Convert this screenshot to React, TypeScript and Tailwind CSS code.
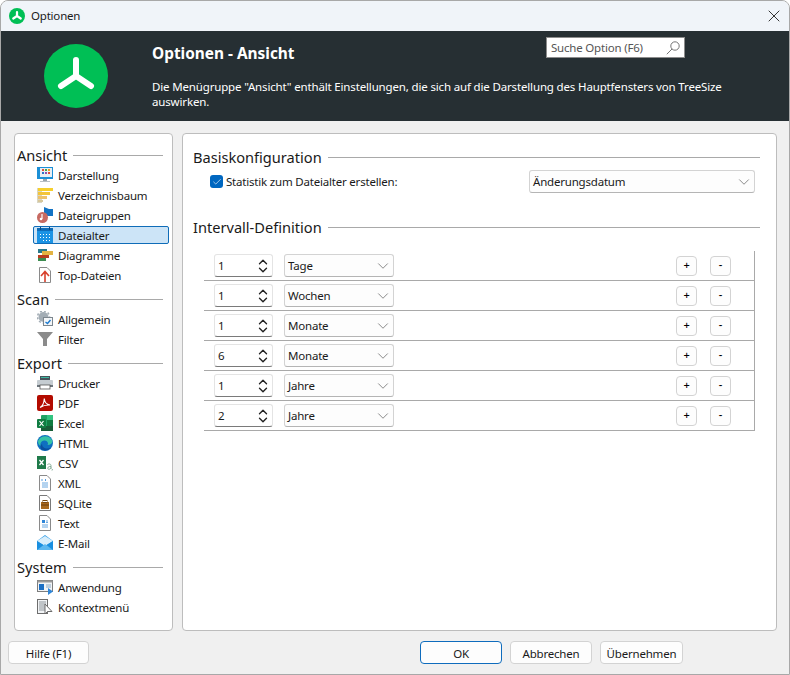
import { Check, ChevronDown, ChevronUp, X } from "lucide-react";
import type { ReactNode } from "react";

const font = { fontFamily: '"Noto Sans", "Open Sans", sans-serif' };

const TreeMark = ({ size, width }: { size: number; width: number }) => (
  <svg width={size} height={size} viewBox="0 0 64 64" className="shrink-0">
    <circle cx="32" cy="32" r="32" fill="#00bf55" />
    <path d="M32 16V32M32 32L17 42M32 32L47 42" stroke="#fff" strokeWidth={width} strokeLinecap="round" fill="none" />
  </svg>
);

const Ico = ({ children }: { children: ReactNode }) => (
  <svg width="16" height="16" viewBox="0 0 16 16" className="shrink-0">
    {children}
  </svg>
);

const icons: Record<string, ReactNode> = {
  Darstellung: (
    <Ico>
      <rect x="0" y="0" width="16" height="12" fill="#1b8fd6" />
      <rect x="3" y="1" width="12" height="9" fill="#e8eef3" />
      <rect x="5" y="2" width="2" height="2" fill="#e04a3a" />
      <rect x="8" y="2" width="2" height="2" fill="#45a845" />
      <rect x="11" y="2" width="2" height="2" fill="#e8a020" />
      <rect x="5" y="5" width="2" height="2" fill="#2a70c8" />
      <rect x="8" y="5" width="2" height="2" fill="#8a50b0" />
      <rect x="11" y="5" width="2" height="2" fill="#e04a3a" />
      <rect x="6" y="12" width="4" height="2" fill="#9aa4ac" />
      <rect x="3" y="14" width="10" height="1" fill="#b8c0c6" />
    </Ico>
  ),
  Verzeichnisbaum: (
    <Ico>
      <rect x="0" y="1" width="5" height="15" fill="#d9d6c4" />
      <rect x="1" y="1" width="15" height="3" fill="#f6cf2c" />
      <rect x="1" y="5" width="12" height="3" fill="#f3c53a" />
      <rect x="1" y="9" width="9" height="3" fill="#eec26a" />
      <rect x="1" y="13" width="5" height="2" fill="#d8c79a" />
    </Ico>
  ),
  Dateigruppen: (
    <Ico>
      <path d="M7 0L12 2H16V9H7Z" fill="#1273c4" />
      <circle cx="5.5" cy="10.5" r="5.5" fill="#c76a62" />
      <path d="M5 7V12" stroke="#fff" strokeWidth="1.2" />
      <circle cx="4" cy="12" r="1.3" fill="#fff" />
    </Ico>
  ),
  Dateialter: (
    <Ico>
      <rect x="0" y="1" width="16" height="15" fill="#1b93e4" />
      <rect x="0" y="1" width="16" height="3" fill="#0f6cb8" />
      <rect x="3" y="0" width="1" height="3" fill="#0b4d86" />
      <rect x="12" y="0" width="1" height="3" fill="#0b4d86" />
      <path d="M3 7h1v1H3zM6 7h1v1H6zM9 7h1v1H9zM12 7h1v1h-1zM3 10h1v1H3zM6 10h1v1H6zM9 10h1v1H9zM12 10h1v1h-1zM6 13h1v1H6zM9 13h1v1H9zM12 13h1v1h-1z" fill="#fff" />
    </Ico>
  ),
  Diagramme: (
    <Ico>
      <rect x="1" y="2" width="9" height="4" fill="#2a7a8c" />
      <rect x="5" y="4" width="11" height="4" fill="#e3b341" />
      <rect x="1" y="8" width="11" height="3" fill="#b83d1e" />
      <rect x="1" y="11" width="8" height="3" fill="#3d8c50" />
    </Ico>
  ),
  "Top-Dateien": (
    <Ico>
      <path d="M2.5 0.5H10L13.5 4V15.5H2.5Z" fill="#fff" stroke="#8a8a8a" />
      <path d="M8 15V5M4 9L8 4.5L12 9" stroke="#d8402c" strokeWidth="1.6" fill="none" />
    </Ico>
  ),
  Allgemein: (
    <Ico>
      <circle cx="6.5" cy="6" r="5" fill="#a3adb5" />
      <circle cx="6.5" cy="6" r="6" fill="none" stroke="#a3adb5" strokeWidth="1.6" strokeDasharray="2 2" />
      <rect x="6.5" y="6.5" width="9" height="8" fill="#f4f6f8" stroke="#7c868e" />
      <path d="M8.5 11L10.5 12.5L13.5 9" stroke="#1b7ad0" strokeWidth="1.4" fill="none" />
    </Ico>
  ),
  Filter: (
    <Ico>
      <path d="M0 1H16L10 8V15L6 15V8Z" fill="#8b8b8b" />
    </Ico>
  ),
  Drucker: (
    <Ico>
      <rect x="3" y="1" width="10" height="4" fill="#48525a" />
      <rect x="4" y="2" width="8" height="1" fill="#3bb8a0" />
      <rect x="0" y="5" width="16" height="7" rx="1" fill="#c5ccd1" />
      <rect x="0" y="10" width="16" height="2" fill="#6d767d" />
      <rect x="3" y="10" width="10" height="4" fill="#fff" stroke="#555" strokeWidth="0.8" />
    </Ico>
  ),
  PDF: (
    <Ico>
      <rect x="0" y="0" width="16" height="16" rx="2" fill="#b30b00" />
      <path d="M3 12.5C5 11.5 7 7.5 7.3 3.5C7.5 7 9.5 9.5 13 10C10 9.8 6 10.5 3 12.5Z" fill="none" stroke="#fff" strokeWidth="1.1" />
    </Ico>
  ),
  Excel: (
    <Ico>
      <rect x="4" y="0" width="12" height="16" rx="1" fill="#21a366" />
      <rect x="10" y="0" width="6" height="5" fill="#33c481" />
      <rect x="4" y="11" width="12" height="5" fill="#185c37" />
      <rect x="10" y="5" width="6" height="6" fill="#107c41" />
      <rect x="0" y="4" width="9" height="9" rx="1" fill="#107c41" />
      <path d="M2.5 6L6.5 11M6.5 6L2.5 11" stroke="#fff" strokeWidth="1.2" />
    </Ico>
  ),
  HTML: (
    <Ico>
      <circle cx="8" cy="8" r="8" fill="#0f6fc0" />
      <path d="M1 6C3 1 11 -1 15 5C16 8 14 10 10.5 10C12 8 10 5 7 5.5C4 6 3 8.5 3.5 11C1.5 10 1 8 1 6Z" fill="#36c3a8" />
      <path d="M5 9C5 13 10 15 14 12.5C12 15.5 7 16.5 4 14C3 12 3.5 10 5 9Z" fill="#0b4f9e" />
    </Ico>
  ),
  CSV: (
    <Ico>
      <rect x="0" y="1" width="9" height="13" fill="#1f7a4a" />
      <path d="M2.5 5L6.5 10M6.5 5L2.5 10" stroke="#fff" strokeWidth="1.3" />
      <path d="M14 14V10.5C14 8.5 10.5 8.5 10.5 10M14 11.5C10 11 10 14.5 12 14.3C13 14.2 14 13.5 14 12.5" stroke="#7fa892" fill="none" strokeWidth="0.9" />
      <path d="M15 15.5L15.5 14" stroke="#7fa892" strokeWidth="0.9" />
    </Ico>
  ),
  XML: (
    <Ico>
      <path d="M2.5 0.5H10L13.5 4V15.5H2.5Z" fill="#fff" stroke="#8a8a8a" />
      <path d="M5.5 4L4.5 5L5.5 6M8 4L9 5L8 6" stroke="#2f86d8" fill="none" strokeWidth="0.8" />
      <path d="M5 8H11M5 10H11M5 12H11" stroke="#6aa8e0" />
    </Ico>
  ),
  SQLite: (
    <Ico>
      <path d="M2.5 0.5H10L13.5 4V15.5H2.5Z" fill="#fff" stroke="#7a7a7a" />
      <rect x="4" y="7" width="8" height="7" fill="#a9691f" />
      <rect x="6" y="5.5" width="4" height="2" fill="none" stroke="#7a4a14" />
      <rect x="4" y="9.5" width="8" height="1" fill="#6b3f0e" />
    </Ico>
  ),
  Text: (
    <Ico>
      <path d="M2.5 0.5H10L13.5 4V15.5H2.5Z" fill="#fff" stroke="#8a8a8a" />
      <rect x="5" y="5" width="3" height="3" fill="#2f86d8" />
      <path d="M9 6H11M9 7.5H11M5 10H11M5 12H11" stroke="#6aa8e0" />
    </Ico>
  ),
  "E-Mail": (
    <Ico>
      <path d="M0 6L8 0L16 6V15H0Z" fill="#2a9ae6" />
      <path d="M0 6L8 11L16 6L8 1Z" fill="#d8eefb" />
      <path d="M0 6L8 11L16 6V15H0Z" fill="#1a8fe0" />
      <path d="M0 15L8 9L16 15Z" fill="#5cb8f0" />
    </Ico>
  ),
  Anwendung: (
    <Ico>
      <rect x="0.5" y="1.5" width="15" height="11" fill="#f2f4f6" stroke="#7d7d7d" />
      <rect x="0.5" y="1.5" width="15" height="2" fill="#9a9a9a" />
      <rect x="2" y="5" width="5" height="6" fill="#1c6fc4" />
      <path d="M9 6H14M9 8H14" stroke="#8aa8c4" />
      <path d="M11 9L16 12.5L11 16Z" fill="#2f86d8" />
    </Ico>
  ),
  Kontextmenü: (
    <Ico>
      <rect x="0.5" y="0.5" width="10" height="14" fill="#f2f4f6" stroke="#6d6d6d" />
      <path d="M2 3H9M2 5H9M2 7H9M2 9H9M2 11H9" stroke="#8d9499" />
      <path d="M8 5L8 15L10.5 12.5L15 12.5Z" fill="#fff" stroke="#6d6d6d" />
    </Ico>
  ),
};

const sections = [
  { title: "Ansicht", items: ["Darstellung", "Verzeichnisbaum", "Dateigruppen", "Dateialter", "Diagramme", "Top-Dateien"] },
  { title: "Scan", items: ["Allgemein", "Filter"] },
  { title: "Export", items: ["Drucker", "PDF", "Excel", "HTML", "CSV", "XML", "SQLite", "Text", "E-Mail"] },
  { title: "System", items: ["Anwendung", "Kontextmenü"] },
];

const rows = [
  ["1", "Tage"],
  ["1", "Wochen"],
  ["1", "Monate"],
  ["6", "Monate"],
  ["1", "Jahre"],
  ["2", "Jahre"],
];

const GroupTitle = ({ title }: { title: string }) => (
  <div className="flex items-center gap-[6px] h-[20px]">
    <span className="text-[14.6px] tracking-normal text-[#1a1a1a] leading-[20px]">{title}</span>
    <div className="flex-1 h-px bg-[#a9a9a9]" />
  </div>
);

const Combo = ({ value, className }: { value: string; className: string }) => (
  <div className={`flex items-center justify-between pl-[3px] pr-px bg-[#fdfdfd] border border-[#d3d3d3] border-b-[#b5b5b5] rounded-[3px] text-[#1a1a1a] ${className}`}>
    <span>{value}</span>
    <ChevronDown size={18} strokeWidth={1} className="text-[#666]" />
  </div>
);

const SmallBtn = ({ label }: { label: string }) => (
  <div className="w-[21px] h-[20px] flex items-center justify-center bg-[#fdfdfd] border border-[#d3d3d3] rounded-[4px] text-[11px] font-medium text-black">
    {label}
  </div>
);

const FootBtn = ({ label, className }: { label: string; className: string }) => (
  <div className={`h-[23px] flex items-center justify-center bg-[#fdfdfd] border rounded-[4px] text-[#1a1a1a] ${className}`}>
    <span className="pt-[2px]">{label}</span>
  </div>
);

export default function App() {
  return (
    <div style={font} className="w-[790px] h-[675px] flex flex-col bg-[#f0f0f0] border border-[#a8a8a8] rounded-t-[8px] overflow-hidden text-[11.5px] tracking-[-0.2px]">
      {/* title bar */}
      <div className="h-[30px] shrink-0 flex items-center bg-[#f0f4f9] pl-2 pr-[5px]">
        <TreeMark size={16} width={9} />
        <span className="ml-[6px] text-[#1a1a1a]">Optionen</span>
        <X size={20} strokeWidth={1.1} className="ml-auto text-[#222]" />
      </div>

      {/* header */}
      <div className="h-[90px] shrink-0 flex bg-[#262f33] text-white pl-[43px] pr-[60px]">
        <div className="pt-[13px]">
          <TreeMark size={64} width={6} />
        </div>
        <div className="ml-[44px] flex-1 pt-[6px]">
          <div className="flex items-start justify-between pr-[44px]">
            <div className="pt-[6px] text-[15.4px] tracking-normal font-bold leading-[22px]">Optionen - Ansicht</div>
            <div className="w-[139px] h-[21px] flex items-center justify-between pl-1 pr-1 bg-white border border-[#8c8c8c] text-[#555]">
              <span>Suche Option (F6)</span>
              <svg width="14" height="14" viewBox="0 0 14 14" fill="none" stroke="#666" strokeWidth="0.9" className="shrink-0">
                <circle cx="9" cy="5" r="4.2" />
                <path d="M6 8L0.8 13.2" />
              </svg>
            </div>
          </div>
          <p className="mt-[14px] leading-[15px] tracking-[-0.155px]">
            Die Menügruppe "Ansicht" enthält Einstellungen, die sich auf die Darstellung des Hauptfensters von TreeSize auswirken.
          </p>
        </div>
      </div>

      {/* panels */}
      <div className="flex-1 flex gap-[9px] pl-[13px] pr-3 pt-3">
        <div className="w-[159px] h-[498px] bg-white border border-[#bdbdbd] rounded-[4px] pl-[2px] pr-[9px] pt-[7px]">
          {sections.map((s) => (
            <div key={s.title}>
              <div className="pt-1">
                <GroupTitle title={s.title} />
              </div>
              {s.items.map((item) =>
                item === "Dateialter" ? (
                  <div key={item} className="h-[18px] my-px ml-[16px] -mr-[6px] flex items-center gap-[5px] pl-[3px] bg-[#cce4f7] border border-[#0f6cb8] rounded-[2px] text-[#1a1a1a]">
                    {icons[item]}
                    <span className="pt-[2px]">{item}</span>
                  </div>
                ) : (
                  <div key={item} className="h-[20px] ml-[16px] -mr-[6px] flex items-center gap-[5px] pl-[4px] text-[#1a1a1a]">
                    {icons[item]}
                    <span className="pt-[2px]">{item}</span>
                  </div>
                )
              )}
            </div>
          ))}
        </div>

        <div className="w-[595px] h-[498px] bg-white border border-[#bdbdbd] rounded-[4px] pl-[10px] pr-4 pt-[13px]">
          <GroupTitle title="Basiskonfiguration" />
          <div className="mt-[3px] ml-[17px] mr-[5px] h-[23px] flex items-center justify-between">
            <div className="flex items-center gap-[3px] text-[#1a1a1a]">
              <div className="w-[13px] h-[13px] rounded-[3px] bg-[#0067c0] flex items-center justify-center">
                <Check size={10} strokeWidth={1.5} className="text-white" />
              </div>
              Statistik zum Dateialter erstellen:
            </div>
            <Combo value="Änderungsdatum" className="w-[226px] h-[23px]" />
          </div>

          <div className="mt-[24px]">
            <GroupTitle title="Intervall-Definition" />
          </div>

          <div className="mt-[14px] ml-[11px] mr-[5px] border-r border-[#a9a9a9]">
            {rows.map(([n, unit], i) => (
              <div key={i} className="h-[30px] flex items-center border-b border-[#a9a9a9] pl-[10px] pr-[23px]">
                <div className="w-[59px] h-[23px] flex items-center justify-between pl-[3px] pr-[2px] bg-white border border-[#e4e4e4] border-b-[#7a7a7a] rounded-[3px] text-[#1a1a1a]">
                  <span>{n}</span>
                  <div className="flex flex-col -space-y-[6px]">
                    <ChevronUp size={14} strokeWidth={2.4} className="text-[#222]" />
                    <ChevronDown size={14} strokeWidth={2.4} className="text-[#222]" />
                  </div>
                </div>
                <Combo value={unit} className="ml-[11px] w-[110px] h-[23px]" />
                <div className="ml-auto flex gap-[13px]">
                  <SmallBtn label="+" />
                  <SmallBtn label="-" />
                </div>
              </div>
            ))}
          </div>
        </div>
      </div>

      {/* footer */}
      <div className="h-[43px] shrink-0 flex items-start pl-[7px] pt-[10px]">
        <FootBtn label="Hilfe (F1)" className="w-[81px] border-[#d3d3d3]" />
        <FootBtn label="OK" className="ml-[331px] w-[82px] border-[#0f6cbd] rounded-[4px]" />
        <FootBtn label="Abbrechen" className="ml-2 w-[82px] border-[#d3d3d3]" />
        <FootBtn label="Übernehmen" className="ml-2 w-[83px] border-[#d3d3d3]" />
      </div>
    </div>
  );
}
